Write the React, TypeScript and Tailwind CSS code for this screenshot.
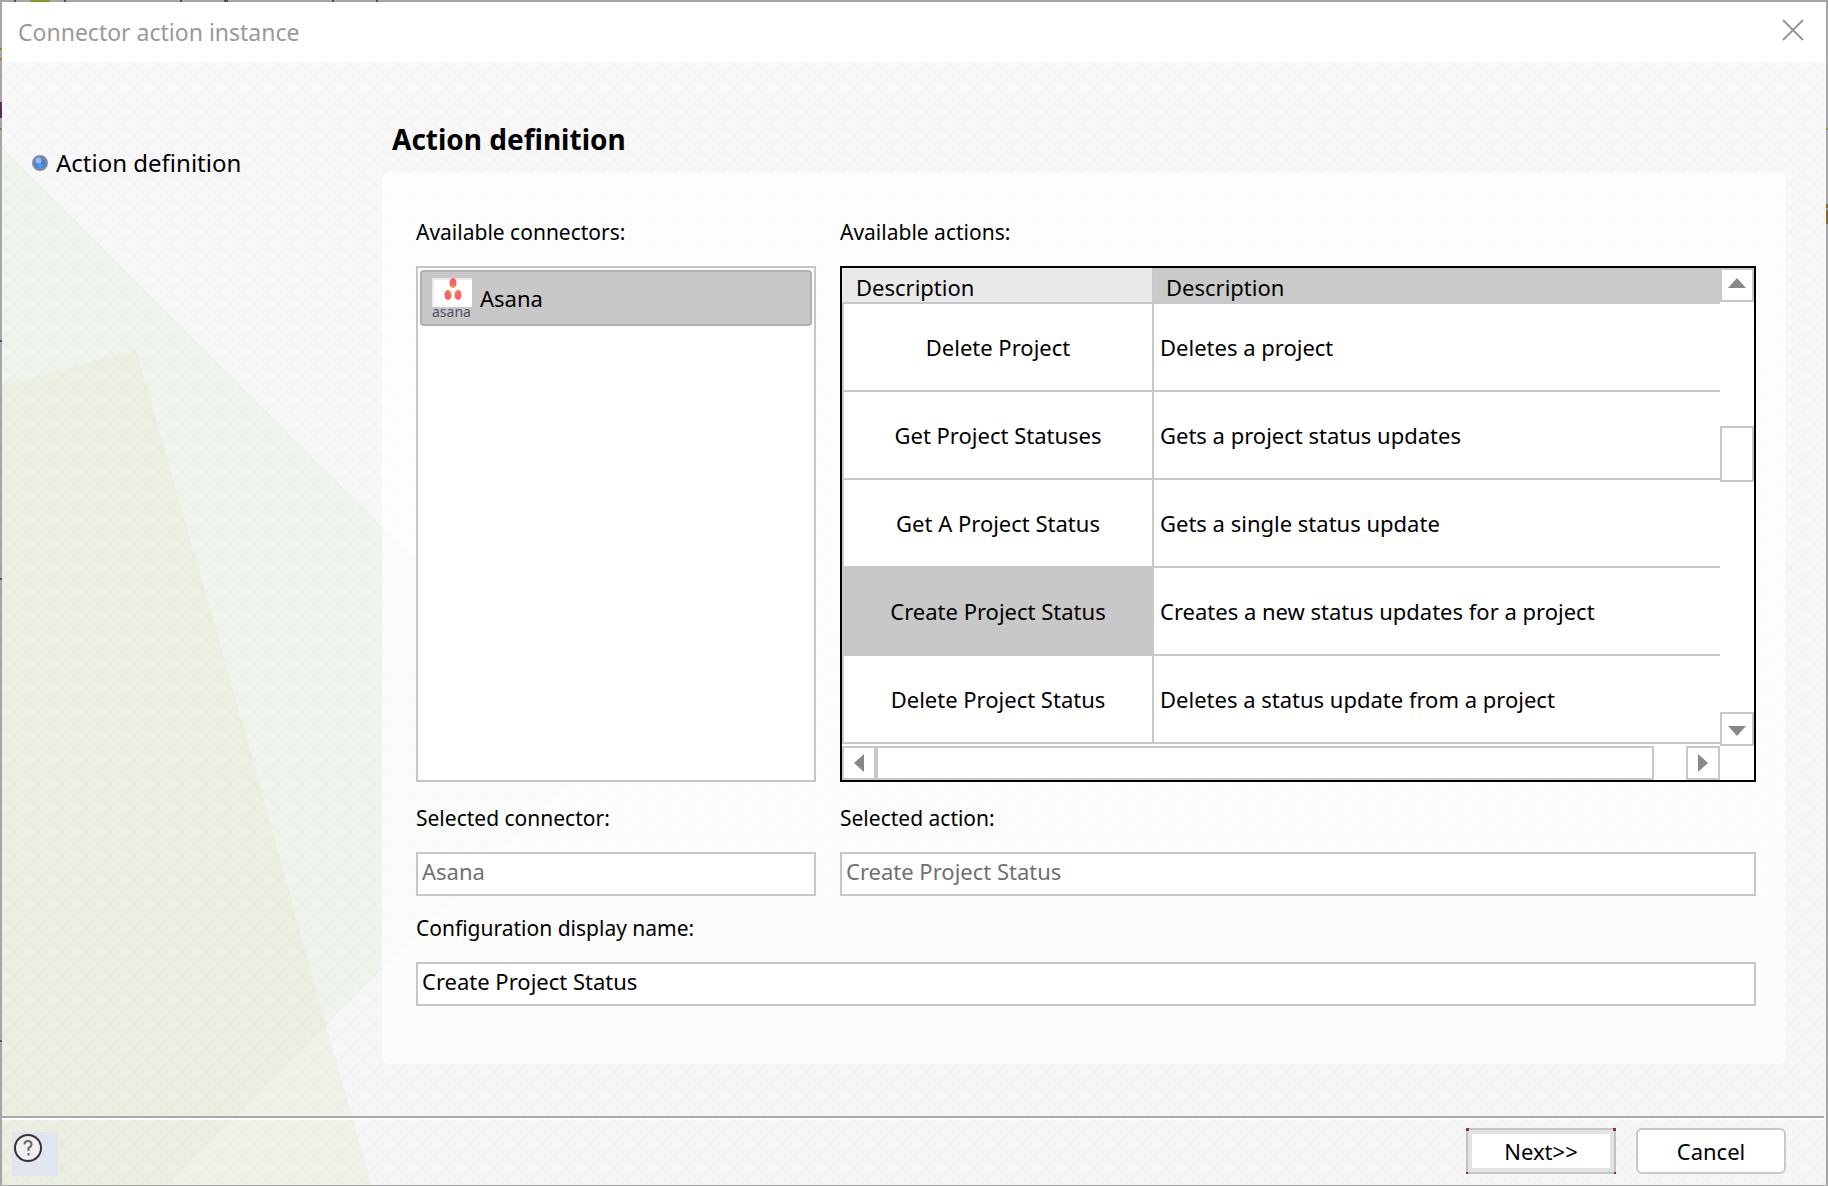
import { useId, useState } from 'react'

const ACTIONS = [
  { name: 'Delete Project', description: 'Deletes a project' },
  { name: 'Get Project Statuses', description: 'Gets a project status updates' },
  { name: 'Get A Project Status', description: 'Gets a single status update' },
  { name: 'Create Project Status', description: 'Creates a new status updates for a project' },
  { name: 'Delete Project Status', description: 'Deletes a status update from a project' },
]

// Decorative backdrop: diamond lattice, two tinted shapes and the window frame
function Backdrop() {
  return (
    <svg className="absolute inset-0 h-full w-full" aria-hidden="true">
      <defs>
        <linearGradient id="base" x1="0" y1="0" x2="0" y2="1">
          <stop offset="0" stopColor="#f8f8f8" />
          <stop offset="1" stopColor="#f6f6f6" />
        </linearGradient>
        <pattern id="lattice" width="24" height="24" patternUnits="userSpaceOnUse">
          <path
            d="M-2 0L24 26M20 -2L26 4M-2 8L8 -2M4 26L26 4"
            stroke="#000"
            strokeOpacity="0.011"
            strokeWidth="2"
            fill="none"
          />
        </pattern>
      </defs>
      <rect width="100%" height="100%" fill="url(#base)" />
      <path d="M0 145L603 748L167 1184L0 1351Z" fill="#dfeed8" fillOpacity="0.35" />
      <path d="M0 387L136 350L236 700L326 1025L372 1186H0Z" fill="#e5e4c6" fillOpacity="0.27" />
      <rect width="100%" height="100%" fill="url(#lattice)" />

      {/* frame, with bits of the windows behind showing through */}
      <g fill="#a6a6a8">
        <rect width="100%" height="2" />
        <rect width="2" height="100%" />
        <rect x="100%" width="2" height="100%" transform="translate(-2 0)" />
        <rect y="100%" width="100%" height="1" transform="translate(0 -1)" />
      </g>
      <path d="M30 0H50V2H30Z" fill="#839a2a" />
      <path d="M14 0H16V2H14ZM64 0H66V2H64ZM180 0H182V2H180ZM224 0H228V2H224ZM332 0H334V2H332ZM376 0H378V2H376Z" fill="#4b5060" />
      <path d="M0 48H2V50H0ZM0 58H2V60H0Z" fill="#a87a1c" />
      <path d="M0 102H2V118H0Z" fill="#5d2a5e" />
      <path d="M0 128H2V130H0Z" fill="#80883c" />
      <path d="M0 340H2V342H0ZM0 578H2V580H0ZM0 1040H2V1042H0Z" fill="#55555a" />
      <svg x="100%" overflow="visible">
        <path d="M-2 128H0V130H-2Z" fill="#80983c" />
        <path d="M-2 204H0V208H-2ZM-2 210H0V224H-2Z" fill="#846a30" />
      </svg>
    </svg>
  )
}

function AsanaLogo() {
  return (
    <svg viewBox="0 0 40 40" className="size-10 shrink-0 overflow-visible" aria-hidden="true">
      <defs>
        <radialGradient id="dots" gradientUnits="userSpaceOnUse" cx="21" cy="12" r="13">
          <stop offset="0" stopColor="#ffa43d" />
          <stop offset="0.5" stopColor="#fb6560" />
          <stop offset="1" stopColor="#fb5779" />
        </radialGradient>
      </defs>
      <rect width="40" height="29" fill="#fff" />
      <path d="M0 1H40M1 0V29" stroke="#ececec" strokeWidth="2" />
      <ellipse cx="21" cy="5" rx="3.500" ry="5" fill="url(#dots)" />
      <ellipse cx="16" cy="17" rx="3.500" ry="5" fill="url(#dots)" />
      <ellipse cx="26" cy="17" rx="3.500" ry="5" fill="url(#dots)" />
      <text x="0" y="39" fontSize="14" fill="#4a5264" fontFamily="Noto Sans, sans-serif">
        asana
      </text>
    </svg>
  )
}

function Arrow({ path }: { path: string }) {
  return (
    <svg viewBox="0 0 30 30" className="size-full" aria-hidden="true">
      <path d={path} fill="#888" />
    </svg>
  )
}

function Field({
  label,
  value,
  disabled,
  onChange,
}: {
  label: string
  value: string
  disabled?: boolean
  onChange?: (value: string) => void
}) {
  const id = useId()
  return (
    <div className="flex flex-col gap-[18px]">
      <label htmlFor={id} className="text-[21px] leading-8">
        {label}
      </label>
      <input
        id={id}
        value={value}
        disabled={disabled}
        onChange={(e) => onChange?.(e.target.value)}
        className="h-11 w-full border-2 border-[#c6c6c6] bg-white px-1 pb-[6px] text-[22px] leading-[30px] text-black disabled:text-[#707070]"
      />
    </div>
  )
}

function ActionTable({ selected, onSelect }: { selected: string; onSelect: (name: string) => void }) {
  const arrowButton = 'size-[34px] shrink-0 border-2 border-[#c8c8c8] bg-white'
  return (
    <div className="grid h-[516px] grid-cols-[1fr_34px] grid-rows-[1fr_34px] border-2 border-black bg-white">
      <div className="overflow-hidden">
        <table className="w-full table-fixed border-separate border-spacing-0 text-[22px] leading-[30px]">
          <thead>
            <tr className="h-9">
              <th className="w-[312px] border-r-2 border-b-2 border-[#c8c8c8] bg-[#e9e9e9] px-[14px] pt-1 pb-0 text-left font-normal">
                Description
              </th>
              <th className="border-b-2 border-[#c8c8c8] bg-[#cacaca] px-3 pt-1 pb-0 text-left font-normal">
                Description
              </th>
            </tr>
          </thead>
          <tbody>
            {ACTIONS.map((action) => (
              <tr key={action.name} className="h-[88px] cursor-default" onClick={() => onSelect(action.name)}>
                <td
                  className={
                    action.name === selected
                      ? 'border-x-2 border-b-2 border-[#c8c8c8] bg-[#c8c8c8] text-center'
                      : 'border-x-2 border-b-2 border-[#c8c8c8] text-center'
                  }
                >
                  {action.name}
                </td>
                <td className="border-b-2 border-[#c8c8c8] px-[6px]">{action.description}</td>
              </tr>
            ))}
          </tbody>
        </table>
      </div>

      <div className="flex flex-col">
        <button aria-label="Scroll up" className={arrowButton}>
          <Arrow path="M15 8L24 18H6Z" />
        </button>
        <div className="flex grow flex-col pt-[124px]">
          <div className="h-14 border-2 border-[#c8c8c8] bg-white" />
        </div>
        <button aria-label="Scroll down" className={arrowButton}>
          <Arrow path="M15 22L24 12H6Z" />
        </button>
      </div>

      <div className="flex">
        <button aria-label="Scroll left" className={arrowButton}>
          <Arrow path="M10 15L20 6V24Z" />
        </button>
        <div className="flex grow pr-8">
          <div className="grow border-2 border-[#c8c8c8] bg-white" />
        </div>
        <button aria-label="Scroll right" className={arrowButton}>
          <Arrow path="M20 15L10 6V24Z" />
        </button>
      </div>
    </div>
  )
}

export default function App() {
  const [action, setAction] = useState('Create Project Status')
  const [displayName, setDisplayName] = useState('Create Project Status')

  return (
    <div className="relative isolate flex min-h-screen flex-col p-[2px] pb-px font-['Noto_Sans','Segoe_UI',sans-serif] text-black">
      <Backdrop />
      <header className="relative flex h-[60px] items-center justify-between bg-white pr-[18px] pl-4">
        <h1 className="text-[23px] leading-8 text-[#999]">Connector action instance</h1>
        <button aria-label="Close" className="size-7">
          <svg viewBox="0 0 28 28" className="size-7" aria-hidden="true">
            <path d="M3 2L23 22M23 2L3 22" stroke="#939393" strokeWidth="1.800" fill="none" />
          </svg>
        </button>
      </header>

      <div className="relative flex grow gap-[135px] pr-10">
        <nav className="w-[245px] shrink-0 pt-[84px] pl-[30px]">
          <a href="#action" className="flex items-center gap-2 text-2xl leading-[34px] whitespace-nowrap">
            <svg viewBox="0 0 16 16" className="size-4 shrink-0" aria-hidden="true">
              <circle cx="8" cy="8" r="7" fill="#4b7fd0" stroke="#858b96" strokeWidth="2" />
              <circle cx="6.500" cy="5.500" r="3" fill="#9db8ea" />
              <circle cx="8" cy="10.500" r="2.500" fill="#38a0f0" />
            </svg>
            Action definition
          </a>
        </nav>

        <main id="action" className="grow">
          <h2 className="mt-[60px] mb-4 pl-[10px] text-[28px] leading-[34px] font-bold">Action definition</h2>
          <section className="rounded-lg bg-white/70 pt-11 pr-[30px] pb-[58px] pl-[34px]">
            <div className="grid grid-cols-[400px_1fr] gap-x-6 gap-y-4">
              <div className="flex flex-col gap-[18px] pb-1">
                <h3 className="text-[21px] leading-8">Available connectors:</h3>
                <ul className="h-[516px] border-2 border-[#c6c6c6] bg-white p-[2px]">
                  <li className="flex h-14 items-center gap-2 rounded border-2 border-[#b0b0b0] bg-[#c8c8c8] px-[10px] text-[22px] leading-[30px]">
                    <AsanaLogo />
                    Asana
                  </li>
                </ul>
              </div>
              <div className="flex flex-col gap-[18px] pb-1">
                <h3 className="text-[21px] leading-8">Available actions:</h3>
                <ActionTable selected={action} onSelect={setAction} />
              </div>
              <Field label="Selected connector:" value="Asana" disabled />
              <Field label="Selected action:" value={action} disabled />
              <div className="col-span-2">
                <Field label="Configuration display name:" value={displayName} onChange={setDisplayName} />
              </div>
            </div>
          </section>
        </main>
      </div>

      <footer className="relative mr-[2px] flex h-[69px] shrink-0 items-start justify-between border-t-2 border-[#a8a8aa] pr-[38px] pl-[10px] shadow-[inset_0_2px_0_#fff]">
        <button aria-label="Help" className="mt-[14px] flex h-11 w-[46px] items-start bg-[#e0e5ef] px-[2px] pt-[2px]">
          <svg viewBox="0 0 28 28" className="size-7" aria-hidden="true">
            <circle cx="14" cy="14" r="13" fill="#f0f0f0" stroke="#333" strokeWidth="2" />
            <path
              d="M10.500 10.500Q10.500 7 14 7Q17.500 7 17.500 10.500Q17.500 12.500 14.500 14V17M14.500 19V21.500"
              stroke="#666"
              strokeWidth="2"
              fill="none"
            />
          </svg>
        </button>
        <div className="flex gap-5 pt-[10px] text-[22px] leading-[30px]">
          <button className="relative h-[46px] w-[150px] border-2 border-[#c4c4c4] bg-white shadow-[inset_0_0_0_4px_#e3e3e3]">
            <span className="absolute -top-0.5 -left-0.5 size-[3px] bg-[#a02830]" />
            <span className="absolute -top-0.5 -right-0.5 size-[3px] bg-[#a02830]" />
            <span className="absolute -bottom-0.5 -left-0.5 size-[2px] bg-[#a02830]" />
            <span className="absolute -right-0.5 -bottom-0.5 size-[2px] bg-[#a02830]" />
            Next&gt;&gt;
          </button>
          <button className="h-[46px] w-[150px] rounded-md border-2 border-[#c8c8c8] bg-white">Cancel</button>
        </div>
      </footer>
    </div>
  )
}
